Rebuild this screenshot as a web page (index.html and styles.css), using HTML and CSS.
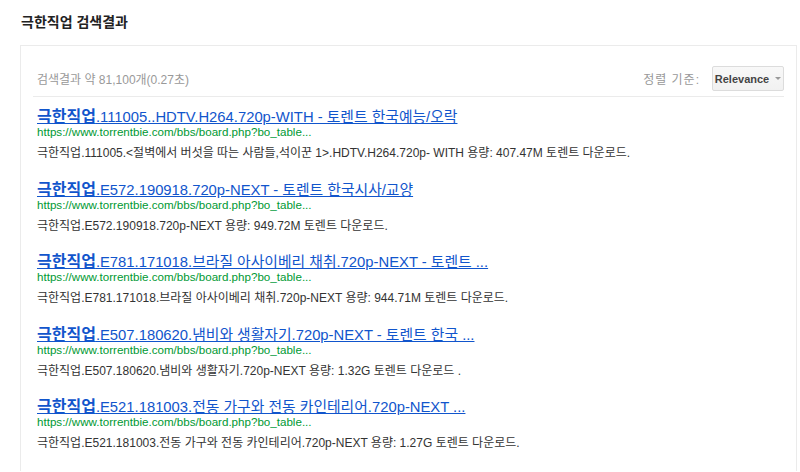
FILE: index.html
```html
<!DOCTYPE html>
<html>
	<head>
		<title>극한직업 검색결과</title>
		<link rel="stylesheet" href="styles.css">
	</head>
	<body>
		<h1 class="page-title">극한직업 검색결과</h1>
		<div class="search-box">
			<div class="top-bar">
				<span class="result-info">검색결과 약 81,100개(0.27초)</span>
				<div class="sort">
					<span class="sort-label">정렬 기준:</span>
					<button type="button" class="sort-button">Relevance<span class="arrow"></span></button>
				</div>
			</div>
			<div class="results">
				<div class="result">
					<a class="result-title" href="#"><b>극한직업</b>.111005..HDTV.H264.720p-WITH - 토렌트 한국예능/오락</a>
					<div class="result-url">https://www.torrentbie.com/bbs/board.php?bo_table...</div>
					<div class="result-snippet">극한직업.111005.&lt;절벽에서 버섯을 따는 사람들,석이꾼 1&gt;.HDTV.H264.720p- WITH 용량: 407.47M 토렌트 다운로드.</div>
				</div>
				<div class="result">
					<a class="result-title" href="#"><b>극한직업</b>.E572.190918.720p-NEXT - 토렌트 한국시사/교양</a>
					<div class="result-url">https://www.torrentbie.com/bbs/board.php?bo_table...</div>
					<div class="result-snippet">극한직업.E572.190918.720p-NEXT 용량: 949.72M 토렌트 다운로드.</div>
				</div>
				<div class="result">
					<a class="result-title" href="#"><b>극한직업</b>.E781.171018.브라질 아사이베리 채취.720p-NEXT - 토렌트 ...</a>
					<div class="result-url">https://www.torrentbie.com/bbs/board.php?bo_table...</div>
					<div class="result-snippet">극한직업.E781.171018.브라질 아사이베리 채취.720p-NEXT 용량: 944.71M 토렌트 다운로드.</div>
				</div>
				<div class="result">
					<a class="result-title" href="#"><b>극한직업</b>.E507.180620.냄비와 생활자기.720p-NEXT - 토렌트 한국 ...</a>
					<div class="result-url">https://www.torrentbie.com/bbs/board.php?bo_table...</div>
					<div class="result-snippet">극한직업.E507.180620.냄비와 생활자기.720p-NEXT 용량: 1.32G 토렌트 다운로드 .</div>
				</div>
				<div class="result">
					<a class="result-title" href="#"><b>극한직업</b>.E521.181003.전동 가구와 전동 카인테리어.720p-NEXT ...</a>
					<div class="result-url">https://www.torrentbie.com/bbs/board.php?bo_table...</div>
					<div class="result-snippet">극한직업.E521.181003.전동 가구와 전동 카인테리어.720p-NEXT 용량: 1.27G 토렌트 다운로드.</div>
				</div>
			</div>
		</div>
	</body>
</html>
```

FILE: styles.css
```css
html,
body {
	margin: 0;
	background-color: white;
	font-family: "Liberation Sans", "Noto Sans CJK KR", sans-serif;
	color: #222;
	overflow: hidden;
}
.page-title {
	margin: 0;
	padding: 14px 0 0 21px;
	font-size: 14px;
	line-height: 17px;
	font-weight: bold;
	color: #222;
}
.search-box {
	margin: 14px 0 0 20px;
	width: 751px;
	border: 1px solid #ebebeb;
	border-bottom: none;
	padding: 20px 12px 0 12px;
	height: 405px;
}
.top-bar {
	display: flex;
	justify-content: space-between;
	align-items: center;
	padding: 0 0 5px 4px;
	border-bottom: 1px solid #ebebeb;
}
.result-info {
	font-size: 12px;
	color: #999;
}
.sort {
	display: flex;
	align-items: center;
	gap: 12px;
}
.sort-label {
	font-size: 12px;
	color: #999;
	letter-spacing: 1px;
}
.sort-button {
	display: flex;
	align-items: center;
	justify-content: center;
	height: 25px;
	width: 72px;
	padding: 0;
	white-space: nowrap;
	font-family: "Liberation Sans", sans-serif;
	font-size: 11px;
	font-weight: bold;
	color: #444;
	background: linear-gradient(#f8f8f8, #f1f1f1);
	border: 1px solid #dcdcdc;
	border-radius: 2px;
}
.arrow {
	display: inline-block;
	margin-left: 6px;
	border-left: 3px solid transparent;
	border-right: 3px solid transparent;
	border-top: 3px solid #999;
}
.results {
	padding: 12px 0 0 4px;
}
.result {
	margin-bottom: 20.5px;
}
.result-title {
	display: block;
	font-size: 14.8px;
	line-height: 16px;
	color: #15c;
	text-decoration: underline;
	white-space: nowrap;
}
.result-title b {
	font-weight: bold;
	font-size: 16px;
}
.result-url {
	font-size: 11.6px;
	line-height: 14px;
	color: #093;
}
.result-snippet {
	margin-top: 6px;
	font-size: 12px;
	line-height: 16px;
	color: #333;
}
```
